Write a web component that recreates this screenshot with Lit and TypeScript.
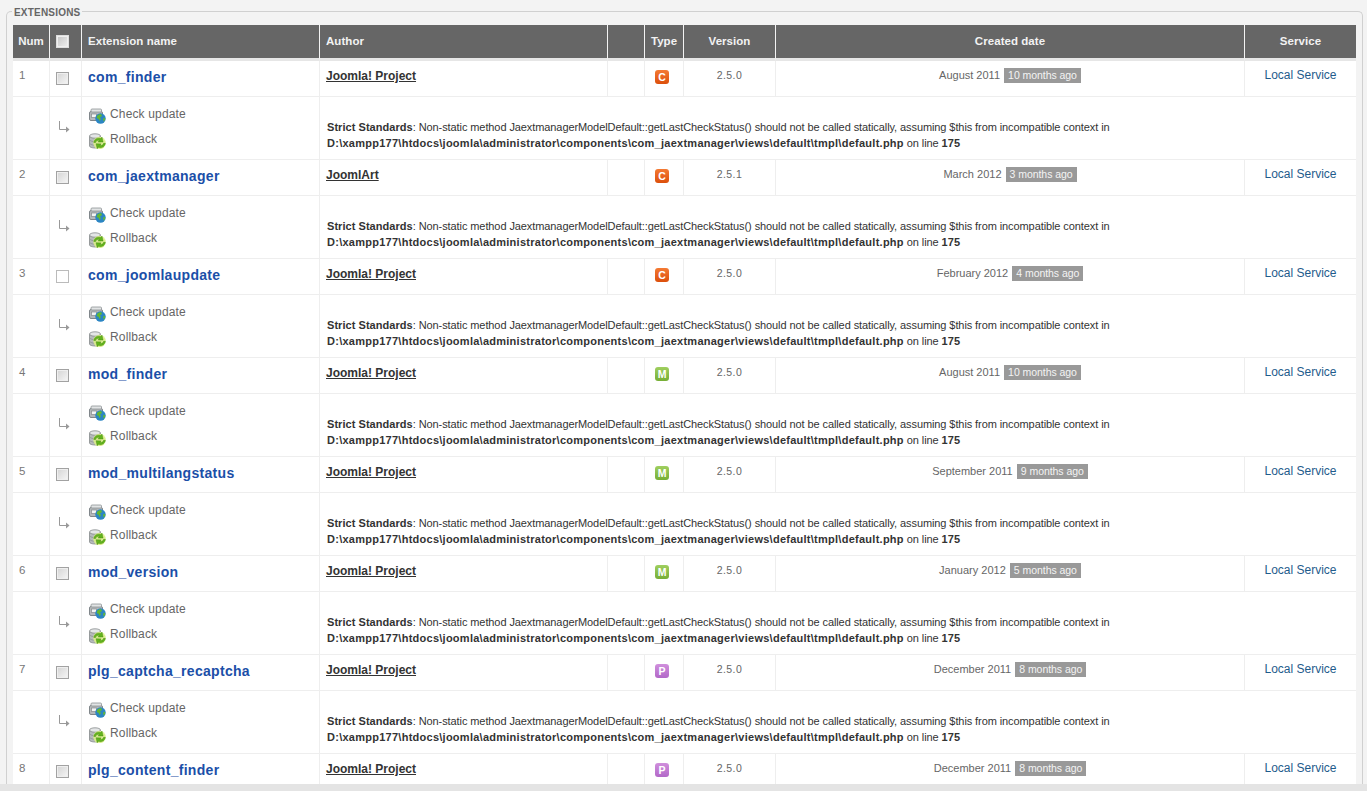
import { LitElement, html, css, svg } from "lit";
import { customElement } from "lit/decorators.js";

const rows = [
  ["com_finder", "Joomla! Project", "C", "2.5.0", "August 2011", "10 months ago"],
  ["com_jaextmanager", "JoomlArt", "C", "2.5.1", "March 2012", "3 months ago"],
  ["com_joomlaupdate", "Joomla! Project", "C", "2.5.0", "February 2012", "4 months ago"],
  ["mod_finder", "Joomla! Project", "M", "2.5.0", "August 2011", "10 months ago"],
  ["mod_multilangstatus", "Joomla! Project", "M", "2.5.0", "September 2011", "9 months ago"],
  ["mod_version", "Joomla! Project", "M", "2.5.0", "January 2012", "5 months ago"],
  ["plg_captcha_recaptcha", "Joomla! Project", "P", "2.5.0", "December 2011", "8 months ago"],
  ["plg_content_finder", "Joomla! Project", "P", "2.5.0", "December 2011", "8 months ago"],
];

const widths = [37, 32, 238, 288, 37, 39, 92, 469, 111];

const arrowIcon = svg`<svg class="arrow" width="13" height="13" viewBox="0 0 13 13"><path d="M1.5 1v8.5H8" fill="none" stroke="#999" stroke-width="1"/><path d="M8 6.5l3.5 3-3.5 3z" fill="#999"/></svg>`;

const checkIcon = svg`<svg class="ico" width="17" height="16" viewBox="0 0 17 16">
  <rect x="0.5" y="3.5" width="13" height="9" rx="1.5" fill="#b4b8ba" stroke="#80868a"/>
  <rect x="2" y="1" width="10.5" height="3" rx="1" fill="#e2e4e5" stroke="#8d9294" stroke-width=".8"/>
  <rect x="2.5" y="6" width="5" height="3.5" fill="#f3f4f4" stroke="#868b8d" stroke-width=".7"/>
  <circle cx="11.5" cy="10.5" r="5.2" fill="#2b85c4"/>
  <path d="M8 8.2c1.2-2 3.4-2.3 4.6-1.8l.2 1.8-1.8 1 .8 1.8-1 2.2-1.2-2.2-1.8-1zM14 10.8l1.8-1.2.4 2-1.4 2.2z" fill="#63b832"/>
</svg>`;

const rollIcon = svg`<svg class="ico" width="17" height="16" viewBox="0 0 17 16">
  <path d="M0.5 3.5v9.5c0 1.2 2.6 2 5.5 2s5.5-.8 5.5-2V3.5z" fill="#b6babc" stroke="#858a8c" stroke-width=".8"/>
  <ellipse cx="6" cy="3" rx="5.5" ry="2.2" fill="#e4e6e7" stroke="#858a8c" stroke-width=".8"/>
  <path d="M.8 7c1 1.2 3 1.7 5.2 1.7M.8 10.5c1 1.2 3 1.7 5.2 1.7" fill="none" stroke="#8a8f91" stroke-width=".7"/>
  <circle cx="10.5" cy="10" r="6.2" fill="#dcef8a" opacity=".9"/>
  <path d="M4.8 9.5c.4-3.4 3.7-5.3 6.9-3.9l1.3-1.5 1.1 5-5-.2 1.2-1.4c-1.9-.5-3.3.5-3.7 2zM16.4 10.3c-.4 3.4-3.7 5.3-6.9 3.9l-1.3 1.5-1.1-5 5 .2-1.2 1.4c1.9.5 3.3-.5 3.7-2z" fill="#62b31c" stroke="#3c8410" stroke-width=".4"/>
</svg>`;

@customElement("app-root")
export class AppRoot extends LitElement {
  static styles = css`
    :host {
      display: block;
      height: 791px;
      overflow: hidden;
      background: #f3f3f3;
      font-family: "Liberation Sans", Arial, sans-serif;
      font-size: 12px;
      color: #666;
      position: relative;
    }
    .set {
      margin: 11px 4px 0 6px;
      padding: 13px 6px 0 6px;
      height: 780px;
      box-sizing: border-box;
      border: 1px solid #d0d0d0;
      border-bottom: none;
      border-radius: 5px 5px 0 0;
      position: relative;
    }
    .legend {
      position: absolute;
      top: -5px;
      left: 5px;
      padding: 0 2px;
      background: #f3f3f3;
      font-size: 10px;
      font-weight: bold;
      line-height: 12px;
      color: #666;
      letter-spacing: 0.2px;
    }
    .clip { height: 759px; overflow: hidden; }
    table {
      table-layout: fixed;
      border-collapse: separate;
      border-spacing: 0;
      width: 1343px;
      background: #fff;
    }
    th {
      background: #666;
      background-clip: padding-box;
      color: #f2f2f2;
      height: 31px;
      padding: 0 0 2px;
      font-size: 11.5px;
      font-weight: bold;
      letter-spacing: 0.05px;
      text-align: center;
      border-right: 1px solid #f3f3f3;
      border-bottom: 3px solid #e6e6e6;
      box-sizing: content-box;
    }
    th:last-child { border-right: none; }
    th.left { text-align: left; padding-left: 6px; }
    th.cbh { text-align: left; padding-left: 6px; }
    td {
      padding: 0;
      border-right: 1px solid #eee;
      border-bottom: 1px solid #eee;
      vertical-align: top;
      box-sizing: border-box;
    }
    td:last-child { border-right: none; }
    tr.main td { height: 36px; }
    tr.sub td { height: 63px; }
    .num { padding: 7px 0 0 6px; line-height: 14px; color: #777; font-size: 11.5px; }
    .cb { padding: 11px 0 0 6px; }
    .box {
      display: inline-block;
      width: 11px;
      height: 11px;
      box-sizing: content-box;
      border: 1px solid #a2a2a2;
      background: linear-gradient(135deg, #d4d4d4, #f6f6f6);
      box-shadow: inset 0 0 0 1px #efefef;
    }
    .box.plain { background: #fff; border-color: #bbb; box-shadow: none; }
    th .box { border-color: #ddd; background: linear-gradient(135deg, #c4c4c4, #efefef); margin-top: 3px; }
    .name {
      display: block;
      padding: 7px 0 0 6px;
      font-size: 14px;
      line-height: 18px;
      font-weight: bold;
      color: #1b4fa8;
      text-decoration: none;
      letter-spacing: 0.3px;
    }
    .author {
      display: block;
      padding: 8px 0 0 6px;
      font-size: 12px;
      line-height: 15px;
      font-weight: bold;
      color: #333;
      text-decoration: underline;
    }
    .type { padding: 9px 0 0 10px; }
    .badge {
      display: inline-block;
      width: 14px;
      height: 14px;
      border-radius: 3px;
      color: #fff;
      font-size: 10.5px;
      font-weight: bold;
      line-height: 14px;
      text-align: center;
      vertical-align: top;
    }
    .badge.C { background: linear-gradient(#f47a33, #dc4f0b); }
    .badge.M { background: linear-gradient(#9fcf5f, #76ae35); }
    .badge.P { background: linear-gradient(#d08fdc, #b268c8); }
    .ver { text-align: center; padding-top: 7px; line-height: 14px; font-size: 10.5px; color: #666; letter-spacing: 0.4px; }
    .date { text-align: center; padding-top: 7px; font-size: 11px; line-height: 15px; color: #666; }
    .ago {
      display: inline-block;
      background: #999;
      color: #f4f4f4;
      padding: 0 4px;
      margin-left: 1px;
      line-height: 15px;
      font-size: 10.5px;
      letter-spacing: -0.05px;
    }
    .svc { text-align: center; padding-top: 7px; line-height: 15px; color: #1f5c8c; }
    .arrowcell { padding: 23px 0 0 8px; }
    .arrow { display: inline-block; }
    .actions { padding: 8px 0 0 7px; display: flex; flex-direction: column; gap: 6px; }
    .action { display: flex; align-items: center; gap: 4px; height: 19px; line-height: 15px; color: #666; letter-spacing: 0.15px; }
    .ico { flex: none; margin-top: 3px; }
    .msg {
      padding: 23px 0 0 7px;
      font-size: 11px;
      letter-spacing: -0.09px;
      line-height: 15.5px;
      color: #333;
    }
    .msg b { letter-spacing: 0.05px; }
    .msg b.path { letter-spacing: 0.26px; }
    .foot {
      position: absolute;
      left: 0;
      right: 0;
      bottom: 0;
      height: 7px;
      background: #e4e4e4;
    }
  `;

  private renderRow(r: string[], i: number) {
    const [name, author, type, ver, date, ago] = r;
    return html`
      <tr class="main">
        <td class="num">${i + 1}</td>
        <td class="cb"><span class="box ${i === 2 ? "plain" : ""}"></span></td>
        <td><a class="name">${name}</a></td>
        <td><a class="author">${author}</a></td>
        <td></td>
        <td class="type"><span class="badge ${type}">${type}</span></td>
        <td class="ver">${ver}</td>
        <td class="date">${date} <span class="ago">${ago}</span></td>
        <td class="svc">Local Service</td>
      </tr>
      <tr class="sub">
        <td></td>
        <td class="arrowcell">${arrowIcon}</td>
        <td>
          <div class="actions">
            <div class="action">${checkIcon}<span>Check update</span></div>
            <div class="action">${rollIcon}<span>Rollback</span></div>
          </div>
        </td>
        <td colspan="6" class="msg">
          <b>Strict Standards</b>: Non-static method JaextmanagerModelDefault::getLastCheckStatus() should not be called statically, assuming $this from incompatible context in<br />
          <b class="path">D:\\xampp177\\htdocs\\joomla\\administrator\\components\\com_jaextmanager\\views\\default\\tmpl\\default.php</b> on line <b>175</b>
        </td>
      </tr>
    `;
  }

  render() {
    return html`
      <div class="set">
        <div class="legend">EXTENSIONS</div>
        <div class="clip">
          <table>
            <colgroup>${widths.map((w) => html`<col style="width:${w}px" />`)}</colgroup>
            <thead>
              <tr>
                <th>Num</th>
                <th class="cbh"><span class="box"></span></th>
                <th class="left">Extension name</th>
                <th class="left">Author</th>
                <th></th>
                <th>Type</th>
                <th>Version</th>
                <th>Created date</th>
                <th>Service</th>
              </tr>
            </thead>
            <tbody>${rows.map((r, i) => this.renderRow(r, i))}</tbody>
          </table>
        </div>
      </div>
      <div class="foot"></div>
    `;
  }
}
